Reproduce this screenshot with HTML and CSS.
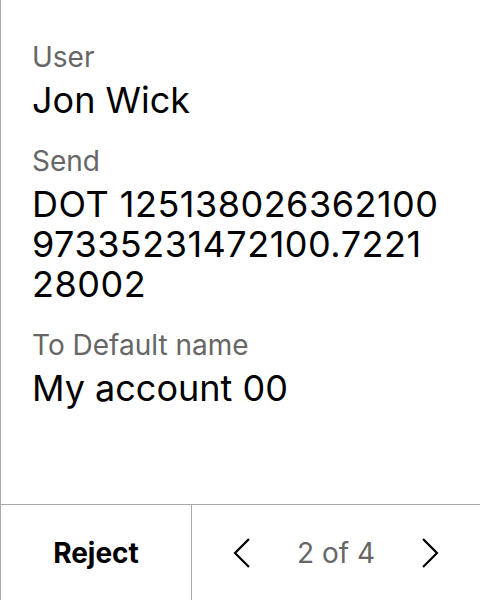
FILE: index.html
```html
<!DOCTYPE html>
<html>
<head>
<meta charset="utf-8">
<link rel="stylesheet" href="styles.css">
</head>
<body>
<div class="screen">
  <main class="content">
    <div class="field">
      <div class="label">User</div>
      <div class="value">Jon Wick</div>
    </div>
    <div class="field">
      <div class="label">Send</div>
      <div class="value amount">DOT 125138026362100<br>97335231472100.7221<br>28002</div>
    </div>
    <div class="field">
      <div class="label">To Default name</div>
      <div class="value">My account 00</div>
    </div>
  </main>
  <footer class="footer">
    <button class="reject">Reject</button>
    <div class="pager">
      <svg class="chev" width="20" height="32" viewBox="0 0 20 32"><path d="M17 2 L3 16 L17 30" fill="none" stroke="#000" stroke-width="2.2"/></svg>
      <span class="count">2 of 4</span>
      <svg class="chev" width="20" height="32" viewBox="0 0 20 32"><path d="M3 2 L17 16 L3 30" fill="none" stroke="#000" stroke-width="2.2"/></svg>
    </div>
  </footer>
</div>
</body>
</html>
```

FILE: styles.css
```css
* { box-sizing: border-box; }
html, body { margin: 0; padding: 0; background: #fff; }
body { font-family: Inter, "Noto Sans", sans-serif; color: #000; }
.screen {
  width: 480px;
  height: 600px;
  display: flex;
  flex-direction: column;
  border-left: 1px solid #a8a8a8;
}
.content {
  flex: 1;
  padding: 40px 20px 0 31px;
  display: flex;
  flex-direction: column;
  gap: 24px;
}
.field {
  display: flex;
  flex-direction: column;
  gap: 6px;
}
.label {
  font-size: 28px;
  line-height: 34px;
  color: #666;
}
.value {
  font-size: 36px;
  line-height: 40px;
  color: #000;
}
.amount {
  letter-spacing: 0.5px;
  white-space: nowrap;
}
.footer {
  height: 96px;
  border-top: 1px solid #a8a8a8;
  display: flex;
}
.reject {
  width: 191px;
  border: 0;
  border-right: 1px solid #a8a8a8;
  background: #fff;
  font-family: inherit;
  font-weight: 700;
  font-size: 28px;
  color: #000;
  padding: 0;
}
.pager {
  flex: 1;
  display: flex;
  align-items: center;
  justify-content: space-between;
  padding: 0 40px 0 40px;
}
.count {
  font-size: 28px;
  color: #666;
}
.chev { display: block; }
```
